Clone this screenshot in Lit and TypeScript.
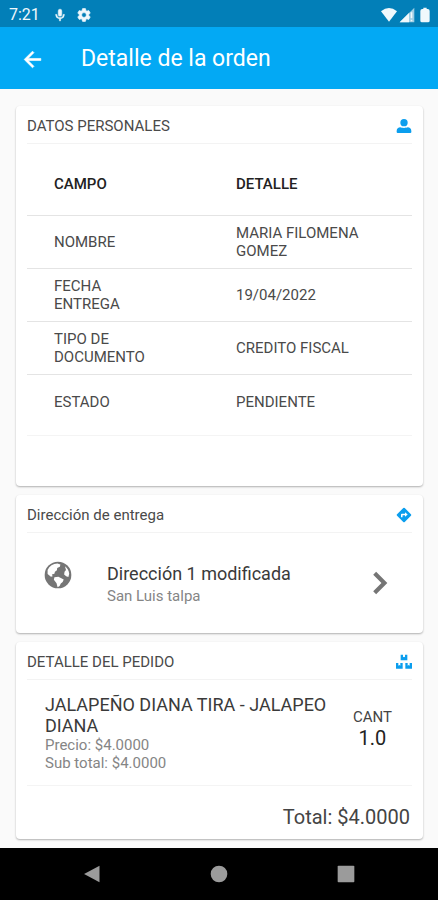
import { LitElement, html, css, svg } from "lit";
import { customElement, property } from "lit/decorators.js";

const glyphs = {
  mic: svg`<path d="M12 14a3 3 0 0 0 3-3V5a3 3 0 0 0-6 0v6a3 3 0 0 0 3 3zm5.500-3a5.500 5.500 0 0 1-11 0H4.500a7.500 7.500 0 0 0 6.500 7.400V22h2v-3.600a7.500 7.500 0 0 0 6.500-7.400z" stroke="currentColor"/>`,
  gear: svg`<path d="M19.140 12.940c.04-.3.06-.61.06-.94s-.02-.64-.07-.94l2.030-1.580a.49.49 0 0 0 .12-.61l-1.920-3.320a.49.49 0 0 0-.59-.22l-2.390.96a7 7 0 0 0-1.620-.94l-.36-2.540a.48.48 0 0 0-.48-.41h-3.840a.48.48 0 0 0-.47.41l-.36 2.540c-.59.24-1.130.57-1.620.94l-2.390-.96a.48.48 0 0 0-.59.22L2.740 8.870a.48.48 0 0 0 .12.61l2.030 1.580c-.05.3-.09.63-.09.94s.02.64.07.94l-2.030 1.580a.49.49 0 0 0-.12.61l1.920 3.320c.12.22.37.29.59.22l2.390-.96c.5.38 1.030.7 1.620.94l.36 2.540c.05.24.24.41.48.41h3.840c.24 0 .44-.17.47-.41l.36-2.540a7 7 0 0 0 1.620-.94l2.390.96c.22.08.47 0 .59-.22l1.920-3.320a.48.48 0 0 0-.12-.61zM12 15.600a3.600 3.600 0 1 1 0-7.200 3.600 3.600 0 0 1 0 7.200z" stroke="currentColor"/>`,
  wifi: svg`<path d="M12 22 0 6.500q12-10 24 0z"/>`,
  signal: svg`<path d="M1 23 23 1v22z" opacity=".65"/><path d="M1 23 15 9v14zM17.500 8h2.500v9h-2.500zM17.500 19h2.500v2.500h-2.500z"/>`,
  battery: svg`<path d="M16 3h-1.500V1h-5v2H8a3 3 0 0 0-3 3v14.500A2.500 2.500 0 0 0 7.500 23h9a2.500 2.500 0 0 0 2.500-2.500V6a3 3 0 0 0-3-3z"/>`,
  back: svg`<path d="M20 11H7.830l5.590-5.590L12 4l-8 8 8 8 1.410-1.410L7.830 13H20z" stroke="currentColor" stroke-width=".6"/>`,
  person: svg`<circle cx="12" cy="7" r="5.500"/><path d="M1 19.500C1 16 3.500 14 6.500 14c2 1.300 9 1.300 11 0 3 0 5.500 2 5.500 5.500V21a1.500 1.500 0 0 1-1.500 1.500h-19A1.500 1.500 0 0 1 1 21z"/>`,
  directions: svg`<path d="m22.400 10.900-9.300-9.300a1.500 1.500 0 0 0-2.200 0l-9.300 9.300a1.500 1.500 0 0 0 0 2.200l9.300 9.300c.6.6 1.600.6 2.200 0l9.300-9.300c.6-.6.6-1.600 0-2.200zM13.500 14.800v-2.500h-3.700v3H7.500V11.500c0-.8.500-1.300 1.300-1.300h4.700V7.700l4 3.550z"/>`,
  boxes: svg`<path d="M7 1h3.500v4L12 4l1.500 1V1H17v8.500H7zM0 13.500h3.500v4l1.500-1 1.500 1v-4H10V22H0zM14 13.500h3.500v4l1.500-1 1.500 1v-4H24V22H14z"/>`,
  globe: svg`<circle cx="12" cy="12" r="10"/><path fill="#fff" d="M4.200 8.200C5.600 5.300 8.200 3.600 11.600 3.400l2.200.8-.4 1.600-2 .9-.2 1.700-1.500 1.100-.4 1.600-1.900.5.600 1.300-1.300.5-2.500-2.200zM9.300 13.700l3-.3 4 1.900-.8 2-1.400 1-.9 2-1.500.8-.8-3-2-2.600zM17.200 5.500c1.800 1.300 3 3.200 3.200 5.500l-.6 2.500-1.700-.5-1.500-1.300.3-2.200 1.100-1.200z"/>`,
  chevron: svg`<path d="M7.600 3.600 5.400 5.800 11.600 12l-6.200 6.200 2.200 2.200L16 12z"/>`,
  navBack: svg`<path d="M2.500 12 21 2v20z"/>`,
  navHome: svg`<circle cx="12" cy="12" r="10"/>`,
  navRecent: svg`<rect x="2" y="2" width="20" height="20" rx="1"/>`,
};

type GlyphName = keyof typeof glyphs;

@customElement("app-icon")
export class AppIcon extends LitElement {
  @property() name: GlyphName = "back";
  static styles = css`
    :host { display: block; flex: none; width: 16px; height: 16px; }
    svg { display: block; width: 100%; height: 100%; fill: currentColor; }
  `;
  render() {
    return html`<svg viewBox="0 0 24 24" aria-hidden="true">${glyphs[this.name]}</svg>`;
  }
}

@customElement("order-card")
export class OrderCard extends LitElement {
  @property() heading = "";
  @property() icon: GlyphName = "person";
  static styles = css`
    :host {
      display: block;
      background: #fff;
      border-radius: 4px;
      padding: 0 11px;
      box-shadow: 0 1px 2px rgba(0, 0, 0, 0.3);
    }
    .head {
      display: flex;
      align-items: center;
      justify-content: space-between;
      box-sizing: border-box;
      height: 38px;
      padding-top: 2px;
      border-bottom: 1px solid #f3f3f3;
    }
    h2 { margin: 0; font-size: 15px; line-height: 18px; font-weight: 400; color: #4a4a4a; }
    app-icon { color: #0b9eee; }
  `;
  render() {
    return html`
      <header class="head"><h2>${this.heading}</h2><app-icon name=${this.icon}></app-icon></header>
      <slot></slot>
    `;
  }
}

@customElement("app-root")
export class AppRoot extends LitElement {
  private rows = [
    ["NOMBRE", "MARIA FILOMENA GOMEZ"],
    ["FECHA ENTREGA", "19/04/2022"],
    ["TIPO DE DOCUMENTO", "CREDITO FISCAL"],
    ["ESTADO", "PENDIENTE"],
  ];

  static styles = css`
    :host {
      display: flex;
      flex-direction: column;
      min-height: 100vh;
      background: #fafafa;
      color: #444;
      font: 15px/18px Roboto, sans-serif;
    }
    button { border: 0; padding: 0; background: none; font: inherit; color: inherit; text-align: left; cursor: pointer; }
    .status {
      display: flex;
      align-items: center;
      gap: 9px;
      height: 27px;
      padding: 2px 5px 0 9px;
      box-sizing: border-box;
      background: #027fb8;
      color: #f0f8fc;
    }
    .time { font-size: 16px; }
    .mic { width: 14px; height: 14px; margin-left: 4px; }
    .levels { display: flex; align-items: center; gap: 2px; margin-left: auto; }
    .bar {
      display: flex;
      align-items: center;
      gap: 36px;
      height: 62px;
      padding: 2px 19px 0 20px;
      box-sizing: border-box;
      background: #03a9f4;
      color: #fff;
    }
    .bar app-icon { width: 25px; height: 25px; }
    h1 { margin: 0; font-size: 23px; line-height: 28px; font-weight: 400; }
    main { flex: 1; display: flex; flex-direction: column; gap: 9px; padding: 17px 15px 9px 16px; }
    table { width: 100%; border-collapse: separate; border-spacing: 0; table-layout: fixed; margin-bottom: 50px; }
    th, td { padding: 0 24px 0 27px; box-sizing: border-box; text-align: left; border-bottom: 1px solid #e4e4e4; }
    th { height: 72px; padding-top: 8px; font-weight: 500; color: #222; }
    td { height: 53px; color: #4a4a4a; }
    .field { width: 182px; padding-right: 50px; }
    .value { padding-left: 27px; }
    tr:last-child td { height: 61px; padding-bottom: 7px; border-color: #f4f4f4; }
    .address { display: flex; align-items: center; width: 100%; min-height: 100px; padding: 0 14px 0 15px; box-sizing: border-box; }
    .globe { width: 32px; height: 32px; margin: 0 33px 16px 0; color: #757575; }
    .grow { flex: 1; display: flex; flex-direction: column; }
    .title { font-size: 18px; line-height: 21px; color: #3a3a3a; }
    .sub { color: #858585; }
    .address .title { line-height: 26px; }
    .chevron { width: 32px; height: 32px; color: #757575; }
    .item { display: flex; align-items: center; gap: 16px; padding: 14px 20px 13px 18px; border-bottom: 1px solid #f4f4f4; }
    .qty { display: flex; flex-direction: column; align-items: center; padding-bottom: 8px; }
    .amount { font-size: 20px; line-height: 24px; color: #222; }
    .total { margin: 0; padding: 19px 2px 10px; text-align: right; font-size: 20px; line-height: 24px; }
    .nav { display: flex; justify-content: space-around; align-items: center; height: 52px; padding: 0 29px; background: #000; color: #9b9b9b; }
    .nav app-icon { width: 20px; height: 20px; }
  `;

  render() {
    return html`
      <div class="status">
        <span class="time">7:21</span>
        <app-icon class="mic" name="mic"></app-icon>
        <app-icon name="gear"></app-icon>
        <div class="levels">
          <app-icon name="wifi"></app-icon>
          <app-icon name="signal"></app-icon>
          <app-icon name="battery"></app-icon>
        </div>
      </div>
      <header class="bar">
        <button aria-label="Volver"><app-icon name="back"></app-icon></button>
        <h1>Detalle de la orden</h1>
      </header>
      <main>
        <order-card heading="DATOS PERSONALES" icon="person">
          <table>
            <thead>
              <tr><th class="field" scope="col">CAMPO</th><th class="value" scope="col">DETALLE</th></tr>
            </thead>
            <tbody>
              ${this.rows.map(([k, v]) => html`<tr><td class="field">${k}</td><td class="value">${v}</td></tr>`)}
            </tbody>
          </table>
        </order-card>
        <order-card heading="Dirección de entrega" icon="directions">
          <button class="address">
            <app-icon class="globe" name="globe"></app-icon>
            <span class="grow">
              <span class="title">Dirección 1 modificada</span>
              <span class="sub">San Luis talpa</span>
            </span>
            <app-icon class="chevron" name="chevron"></app-icon>
          </button>
        </order-card>
        <order-card heading="DETALLE DEL PEDIDO" icon="boxes">
          <div class="item">
            <div class="grow">
              <span class="title">JALAPEÑO DIANA TIRA - JALAPEO DIANA</span>
              <span class="sub">Precio: $4.0000</span>
              <span class="sub">Sub total: $4.0000</span>
            </div>
            <div class="qty"><span>CANT</span><span class="amount">1.0</span></div>
          </div>
          <p class="total">Total: $4.0000</p>
        </order-card>
      </main>
      <nav class="nav">
        <button aria-label="Atrás"><app-icon name="navBack"></app-icon></button>
        <button aria-label="Inicio"><app-icon name="navHome"></app-icon></button>
        <button aria-label="Recientes"><app-icon name="navRecent"></app-icon></button>
      </nav>
    `;
  }
}
